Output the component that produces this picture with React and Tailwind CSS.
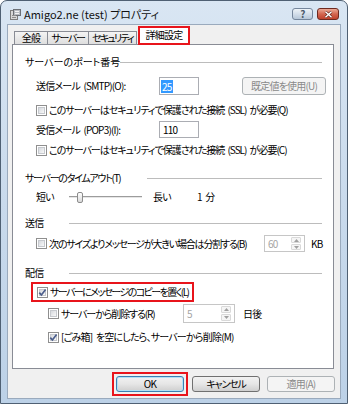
import React from "react";

const font = "[font-family:'Noto_Sans_CJK_JP',sans-serif] [font-feature-settings:'palt'] tracking-[-0.8px] [word-spacing:2px]";

const CheckBox = ({ checked }) => (
  <span className="flex h-[11px] w-[11px] shrink-0 border border-[#8f8f8f] bg-white p-[1px]">
    <span className="flex h-full w-full items-center justify-center border border-[#c6c9ce] bg-gradient-to-br from-[#d6d9de] to-[#f8f8f8]">
      {checked && (
        <svg width="9" height="9" viewBox="0 0 9 9" className="overflow-visible">
          <path d="M1.3 4.6 L3.4 7 L7.6 1.4" fill="none" stroke="#4b5e8c" strokeWidth="1.7" />
        </svg>
      )}
    </span>
  </span>
);

const Heading = ({ label, labelWidth, className }) => (
  <div className={`flex h-[14px] items-center ${className}`}>
    <span className={`shrink-0 whitespace-nowrap ${labelWidth}`}>{label}</span>
    <div className="h-px flex-1 bg-[#bcbcbc]" />
  </div>
);

const Arrow = ({ up }) => (
  <svg width="5" height="3" viewBox="0 0 5 3">
    <path d={up ? "M0 3 L2.5 0 L5 3 Z" : "M0 0 L2.5 3 L5 0 Z"} fill="#a0a0a0" />
  </svg>
);

const Spinner = ({ value, box }) => (
  <div className={`flex shrink-0 items-stretch border border-[#c6c6c6] bg-white ${box}`}>
    <span className="flex flex-1 items-center pl-[3px] text-[#a5a5a5]">{value}</span>
    <div className="my-[1px] mr-[3px] flex w-[10px] flex-col gap-px">
      <span className="flex flex-1 items-center justify-center rounded-[1px] border border-[#d9d9d9] bg-[#f5f5f5]">
        <Arrow up />
      </span>
      <span className="flex flex-1 items-center justify-center rounded-[1px] border border-[#d9d9d9] bg-[#f5f5f5]">
        <Arrow />
      </span>
    </div>
  </div>
);

const TitleBar = () => (
  <div className="flex h-[23px] items-center pl-[9px] pr-[8px] pt-[3px]">
    <svg width="11" height="11" viewBox="0 0 11 11">
      <rect x="0.5" y="1.5" width="7" height="9" fill="#d8d8d8" stroke="#7d7d7d" />
      <rect x="3.5" y="0.5" width="7" height="6" fill="#b8bcc2" stroke="#6b6f75" />
      <path d="M5 2.5 H9 M5 4.5 H9" stroke="#f4f4f4" />
      <path d="M2 6.5 H6 M2 8.5 H6" stroke="#8d8d8d" />
    </svg>
    <span className="ml-[3px] whitespace-nowrap text-[11px] tracking-normal text-[#111] [word-spacing:0px]">
      Amigo2.ne (test) プロパティ
    </span>
    <div className="ml-auto flex h-[12px] w-[21px] items-center justify-center rounded-[3px] border border-[#75869c] bg-gradient-to-b from-[#eef3f8] via-[#d3deea] to-[#b7c7d9]">
      <span className="text-[10px] font-bold leading-none text-[#4c5a6b]">?</span>
    </div>
    <div className="ml-[4px] flex h-[12px] w-[22px] items-center justify-center rounded-[3px] border border-[#6e2a20] bg-gradient-to-b from-[#eba996] via-[#d36650] to-[#c0412b]">
      <svg width="9" height="7" viewBox="0 0 9 7">
        <path d="M1.5 0.8 L7.5 6.2 M7.5 0.8 L1.5 6.2" stroke="#5a1d14" strokeWidth="2.6" />
        <path d="M1.5 0.8 L7.5 6.2 M7.5 0.8 L1.5 6.2" stroke="#ffffff" strokeWidth="1.5" />
      </svg>
    </div>
  </div>
);

const Tabs = () => (
  <div className="flex h-[19px] items-end pl-[6px]">
    <div className="flex h-[13px] w-[33px] items-center justify-center whitespace-nowrap border-l border-t border-[#898c95] bg-gradient-to-b from-[#f4f4f4] to-[#dedede]">
      全般
    </div>
    <div className="flex h-[13px] w-[41px] items-center justify-center whitespace-nowrap border-l border-t border-[#898c95] bg-gradient-to-b from-[#f4f4f4] to-[#dedede] tracking-[-1.3px]">
      サーバー
    </div>
    <div className="flex h-[13px] w-[49px] items-center justify-center whitespace-nowrap border-x border-t border-[#898c95] bg-gradient-to-b from-[#f4f4f4] to-[#dedede] tracking-[-1.8px]">
      セキュリティ
    </div>
    <div className="relative z-10 -mb-px ml-px flex h-[19px] w-[52px] items-center justify-center whitespace-nowrap border-2 border-[#e8141b] bg-white pb-[1px]">
      詳細設定
    </div>
  </div>
);

const Panel = () => (
  <div className="ml-[4px] mr-[6px] flex h-[325px] flex-col border border-[#898c95] bg-white pl-[12px] pr-[11px] pt-[10px]">
    <Heading label="サーバーのポート番号" labelWidth="w-[95px] tracking-[0px]" />

    <div className="mt-[8px] flex h-[18px] items-center pl-[11px]">
      <span className="w-[123px] shrink-0 whitespace-nowrap">送信メール (SMTP)(O):</span>
      <div className="flex h-[18px] w-[40px] shrink-0 items-center border border-[#abadb3] bg-white pl-[1px]">
        <span className="bg-[#3399ff] px-px leading-[13px] text-white">25</span>
      </div>
      <div className="ml-[43px] flex h-[18px] w-[84px] shrink-0 items-center justify-center whitespace-nowrap rounded-[3px] border border-[#adb2b5] bg-[#f4f4f4] text-[#8a8a8a]">
        既定値を使用(U)
      </div>
    </div>

    <div className="mt-[8px] flex h-[14px] items-center gap-[2px] pl-[11px]">
      <CheckBox />
      <span className="whitespace-nowrap tracking-[-1px]">このサーバーはセキュリティで保護された接続 (SSL) が必要(Q)</span>
    </div>

    <div className="mt-[4px] flex h-[17px] items-center pl-[11px]">
      <span className="w-[123px] shrink-0 whitespace-nowrap">受信メール (POP3)(I):</span>
      <div className="flex h-[17px] w-[40px] shrink-0 items-center border border-[#abadb3] bg-white pl-[3px]">
        110
      </div>
    </div>

    <div className="mt-[5px] flex h-[14px] items-center gap-[2px] pl-[11px]">
      <CheckBox />
      <span className="whitespace-nowrap tracking-[-1px]">このサーバーはセキュリティで保護された接続 (SSL) が必要(C)</span>
    </div>

    <Heading label="サーバーのタイムアウト(T)" labelWidth="w-[122px] tracking-[-1.3px]" className="mt-[14px]" />

    <div className="mt-[5px] flex h-[14px] items-center pl-[11px]">
      <span className="w-[33px] shrink-0">短い</span>
      <div className="flex w-[73px] shrink-0 items-center">
        <div className="h-[2px] w-[8px] border-t border-[#9c9c9c] bg-[#e6e6e6]" />
        <div className="h-[11px] w-[6px] shrink-0 rounded-[2px] border border-[#8c8c8c] bg-gradient-to-b from-white to-[#d9d9d9]" />
        <div className="h-[2px] flex-1 border-t border-[#9c9c9c] bg-[#e6e6e6]" />
      </div>
      <span className="ml-[11px] w-[44px] shrink-0">長い</span>
      <span className="whitespace-nowrap">1 分</span>
    </div>

    <Heading label="送信" labelWidth="w-[44px]" className="mt-[12px]" />

    <div className="mt-[5px] flex h-[17px] items-center pl-[11px]">
      <div className="flex w-[228px] shrink-0 items-center gap-[2px]">
        <CheckBox />
        <span className="whitespace-nowrap tracking-[-1.2px]">次のサイズよりメッセージが大きい場合は分割する(B)</span>
      </div>
      <Spinner value="60" box="h-[17px] w-[41px]" />
      <span className="ml-[6px]">KB</span>
    </div>

    <Heading label="配信" labelWidth="w-[44px]" className="mt-[14px]" />

    <div className="ml-[6px] mt-[2px] flex h-[20px] w-[163px] items-center gap-[2px] border-2 border-[#e8141b] pl-[4px]">
      <CheckBox checked />
      <span className="whitespace-nowrap tracking-[-1.6px]">サーバーにメッセージのコピーを置く(L)</span>
    </div>

    <div className="mt-[2px] flex h-[19px] items-center pl-[23px]">
      <div className="flex w-[135px] shrink-0 items-center gap-[2px]">
        <CheckBox />
        <span className="whitespace-nowrap tracking-[-1.1px]">サーバーから削除する(R)</span>
      </div>
      <Spinner value="5" box="h-[19px] w-[52px]" />
      <span className="ml-[8px]">日後</span>
    </div>

    <div className="mt-[7px] flex h-[14px] items-center gap-[2px] pl-[23px]">
      <CheckBox checked />
      <span className="whitespace-nowrap">[ごみ箱] を空にしたら、サーバーから削除(M)</span>
    </div>
  </div>
);

const ButtonRow = () => (
  <div className="mt-[3px] flex h-[24px] items-center justify-end pr-[5px]">
    <div className="h-[24px] w-[76px] border-2 border-[#e8141b] p-[2px]">
      <div className="flex h-full w-full items-center justify-center rounded-[3px] border border-[#3c7fb1] bg-gradient-to-b from-[#f2f2f2] via-[#e6e6e6] to-[#cfcfcf] shadow-[inset_0_0_0_1px_#b3e0f5]">
        OK
      </div>
    </div>
    <div className="ml-[4px] flex h-[16px] w-[68px] items-center justify-center rounded-[3px] border border-[#707070] bg-gradient-to-b from-[#f2f2f2] via-[#e6e6e6] to-[#cfcfcf] tracking-[-1.2px]">
      キャンセル
    </div>
    <div className="ml-[7px] flex h-[16px] w-[68px] items-center justify-center rounded-[3px] border border-[#adb2b5] bg-[#f4f4f4] text-[#8a8a8a]">
      適用(A)
    </div>
  </div>
);

export default function App() {
  return (
    <div
      className={`h-[404px] w-[348px] overflow-hidden rounded-t-[7px] border border-[#4f6073] bg-gradient-to-b from-[#d9e6f3] via-[#c9daec] to-[#bcd1e7] text-[10px] leading-none text-black ${font}`}
    >
      <TitleBar />
      <div className="mx-[6px] flex h-[375px] flex-col border border-[#9aaabd] bg-[#f0f0f0]">
        <Tabs />
        <Panel />
        <ButtonRow />
      </div>
    </div>
  );
}
